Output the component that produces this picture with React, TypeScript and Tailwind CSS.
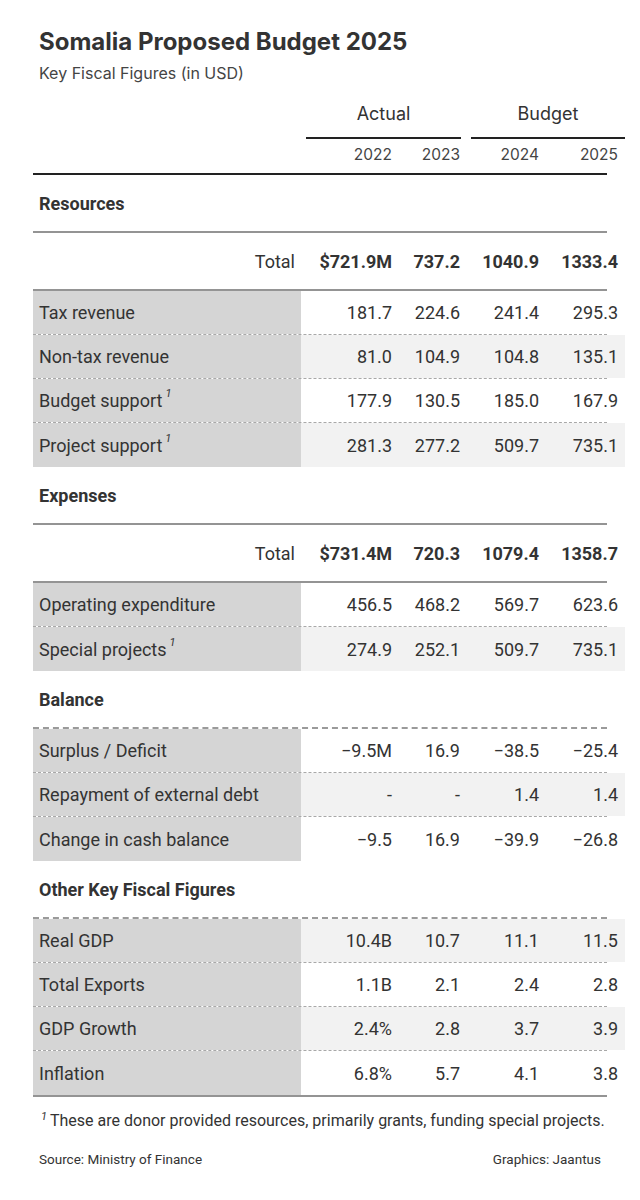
import React from "react";

type Row = { label: string; sup?: boolean; vals: string[]; shade: boolean };

const GRID = "grid grid-cols-[268px_97px_68px_79px_80px]";
const BODY = { fontFamily: "Roboto, 'Liberation Sans', sans-serif" };
const HEAD = { fontFamily: "Inter, 'Liberation Sans', sans-serif" };

function Sup() {
  return (
    <span className="relative -top-[7px] ml-[3px] text-[11px] italic leading-none">1</span>
  );
}

function DataRow({ row, last }: { row: Row; last: boolean }) {
  const border = last ? "" : "border-b border-dashed border-[#a8a8a8]";
  return (
    <div className={`${GRID} h-[44px] text-[18px] text-[#333] ${border}`}>
      <div className="flex items-center bg-[#d5d5d5] pl-[6px]">
        {row.label}
        {row.sup && <Sup />}
      </div>
      {row.vals.map((v, i) => (
        <div
          key={i}
          className={`flex items-center justify-end ${i === 3 ? "pr-[7px]" : "pr-[6px]"} ${
            row.shade ? "bg-[#f2f2f2]" : "bg-white"
          }`}
        >
          {v}
        </div>
      ))}
    </div>
  );
}

function TotalRow({ vals }: { vals: string[] }) {
  return (
    <div className={`${GRID} h-[58px] text-[18px] text-[#333] border-b-2 border-[#949494]`}>
      <div className="flex items-center justify-end pr-[6px]">Total</div>
      {vals.map((v, i) => (
        <div
          key={i}
          className={`flex items-center justify-end font-bold ${i === 3 ? "pr-[7px]" : "pr-[6px]"}`}
        >
          {v}
        </div>
      ))}
    </div>
  );
}

function Section({
  title,
  total,
  rows,
  dashed,
}: {
  title: string;
  total?: string[];
  rows: Row[];
  dashed?: boolean;
}) {
  return (
    <div>
      <div
        className={`pt-[17px] pb-[15px] pl-[6px] text-[18px] font-bold leading-[24px] text-[#333] border-b-2 ${
          dashed ? "border-dashed border-[#9a9a9a]" : "border-[#949494]"
        }`}
      >
        {title}
      </div>
      {total && <TotalRow vals={total} />}
      {rows.map((r, i) => (
        <DataRow key={i} row={r} last={i === rows.length - 1} />
      ))}
    </div>
  );
}

export default function App() {
  return (
    <div className="w-[640px] h-[1200px] bg-white text-[#333]" style={BODY}>
      <div className="px-[33px] pt-[27px]">
        <div className="pl-[6px] text-[24px] font-bold leading-[30px] text-[#333]" style={HEAD}>
          Somalia Proposed Budget 2025
        </div>
        <div className="mt-[6px] pl-[6px] text-[16px] leading-[20px] text-[#444]" style={HEAD}>
          Key Fiscal Figures (in USD)
        </div>

        {/* column headers */}
        <div className={`${GRID} mt-[19px]`} style={HEAD}>
          <div />
          <div className="col-span-2 pl-[5px] pr-[5px]">
            <div className="border-b-2 border-[#222] pb-[11px] text-center text-[18px] leading-[24px] text-[#333]">
              Actual
            </div>
          </div>
          <div className="col-span-2 pl-[5px]">
            <div className="border-b-2 border-[#222] pb-[11px] text-center text-[18px] leading-[24px] text-[#333]">
              Budget
            </div>
          </div>
        </div>
        <div
          className={`${GRID} border-b-2 border-[#222] pt-[6px] pb-[8px] text-[15.5px] leading-[20px] text-[#444]`}
          style={HEAD}
        >
          <div />
          <div className="text-right pr-[6px]">2022</div>
          <div className="text-right pr-[6px]">2023</div>
          <div className="text-right pr-[6px]">2024</div>
          <div className="text-right pr-[7px]">2025</div>
        </div>

        <Section
          title="Resources"
          total={["$721.9M", "737.2", "1040.9", "1333.4"]}
          rows={[
            { label: "Tax revenue", vals: ["181.7", "224.6", "241.4", "295.3"], shade: false },
            { label: "Non-tax revenue", vals: ["81.0", "104.9", "104.8", "135.1"], shade: true },
            { label: "Budget support", sup: true, vals: ["177.9", "130.5", "185.0", "167.9"], shade: false },
            { label: "Project support", sup: true, vals: ["281.3", "277.2", "509.7", "735.1"], shade: true },
          ]}
        />
        <Section
          title="Expenses"
          total={["$731.4M", "720.3", "1079.4", "1358.7"]}
          rows={[
            { label: "Operating expenditure", vals: ["456.5", "468.2", "569.7", "623.6"], shade: false },
            { label: "Special projects", sup: true, vals: ["274.9", "252.1", "509.7", "735.1"], shade: true },
          ]}
        />
        <Section
          title="Balance"
          dashed
          rows={[
            { label: "Surplus / Deficit", vals: ["\u22129.5M", "16.9", "\u221238.5", "\u221225.4"], shade: false },
            { label: "Repayment of external debt", vals: ["-", "-", "1.4", "1.4"], shade: true },
            { label: "Change in cash balance", vals: ["\u22129.5", "16.9", "\u221239.9", "\u221226.8"], shade: false },
          ]}
        />
        <Section
          title="Other Key Fiscal Figures"
          dashed
          rows={[
            { label: "Real GDP", vals: ["10.4B", "10.7", "11.1", "11.5"], shade: true },
            { label: "Total Exports", vals: ["1.1B", "2.1", "2.4", "2.8"], shade: false },
            { label: "GDP Growth", vals: ["2.4%", "2.8", "3.7", "3.9"], shade: true },
            { label: "Inflation", vals: ["6.8%", "5.7", "4.1", "3.8"], shade: false },
          ]}
        />
        <div className="border-t-2 border-[#949494]" />

        <div className="mt-[12px] pl-[8px] whitespace-nowrap text-[16px] leading-[24px] text-[#333]">
          <span className="relative -top-[6px] mr-[3px] text-[11px] italic leading-none">1</span>
          These are donor provided resources, primarily grants, funding special projects.
        </div>
        <div className="mt-[16px] flex justify-between pl-[6px] pr-[6px] text-[13.5px] leading-[20px] text-[#333]">
          <span>Source: Ministry of Finance</span>
          <span>Graphics: Jaantus</span>
        </div>
      </div>
    </div>
  );
}
